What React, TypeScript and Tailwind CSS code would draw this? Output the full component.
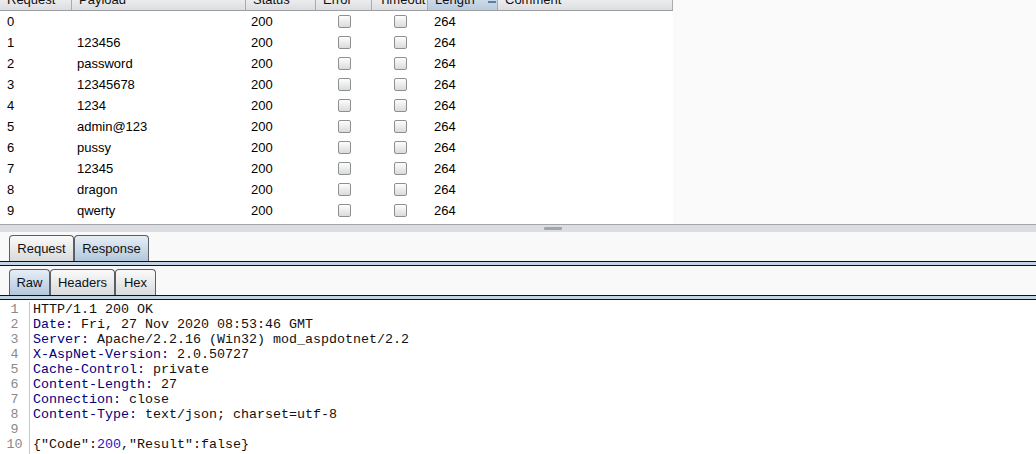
import React from "react";

const payloads = ["", "123456", "password", "12345678", "1234", "admin@123", "pussy", "12345", "dragon", "qwerty"];

const cols = "grid grid-cols-[72px_174px_70px_56px_56px_70px_175px]";

const Check = () => (
    <div className="w-[13px] h-[13px] rounded-[2px] border border-[#8e8f8f] bg-gradient-to-b from-[#fdfdfd] to-[#dadbdc]" />
);

const HeadCell = ({ label, sorted }: { label: string; sorted?: boolean }) => (
    <div
        className={`relative flex items-center pl-[7px] border-r border-[#a9abb0] ${
            sorted ? "bg-gradient-to-b from-[#e4edf6] to-[#b7cadd]" : "bg-gradient-to-b from-[#fdfdfd] to-[#dcdde0]"
        }`}
    >
        {label}
        {sorted && <div className="absolute left-[60px] top-[12px] w-[8px] h-[2px] bg-[#5d7fa6]" />}
    </div>
);

const Tab = ({ label, active, w }: { label: string; active?: boolean; w: string }) => (
    <div
        className={`${w} h-[26px] flex items-center justify-center rounded-t-[4px] border border-b-0 border-[#5a5f66] text-[13px] text-[#111] ${
            active ? "bg-gradient-to-b from-[#e6eef6] to-[#b3c8dc]" : "bg-gradient-to-b from-[#fafafa] to-[#d9dadc]"
        }`}
    >
        {label}
    </div>
);

const TabLine = () => (
    <div className="flex flex-col">
        <div className="h-px bg-[#111]" />
        <div className="h-[3px] bg-[#c3d4e5]" />
        <div className="h-px bg-[#111]" />
    </div>
);

type Seg = [string, string];
const N = "text-[#000080]";
const K = "text-[#111]";
const lines: Seg[][] = [
    [[K, "HTTP/1.1 200 OK"]],
    [[N, "Date:"], [K, " Fri, 27 Nov 2020 08:53:46 GMT"]],
    [[N, "Server:"], [K, " Apache/2.2.16 (Win32) mod_aspdotnet/2.2"]],
    [[N, "X-AspNet-Version:"], [K, " 2.0.50727"]],
    [[N, "Cache-Control:"], [K, " private"]],
    [[N, "Content-Length:"], [K, " 27"]],
    [[N, "Connection:"], [K, " close"]],
    [[N, "Content-Type:"], [K, " text/json; charset=utf-8"]],
    [],
    [[K, "{\"Code\":"], ["text-[#1a1ad0]", "200"], [K, ",\"Result\":false}"]],
];

export default function App() {
    return (
        <div className="w-[1036px] h-[454px] overflow-hidden bg-[#f9f9f9] font-['Liberation_Sans',Arial,sans-serif] text-[13px] text-black">
            <div className="flex h-[224px] bg-[#fafafa]">
                <div className="w-[673px] flex flex-col bg-white">
                    <div className={`${cols} h-[22px] -mt-[11px] border-b border-[#9c9ea3] text-[#111]`}>
                        <HeadCell label="Request" />
                        <HeadCell label="Payload" />
                        <HeadCell label="Status" />
                        <HeadCell label="Error" />
                        <HeadCell label="Timeout" />
                        <HeadCell label="Length" sorted />
                        <HeadCell label="Comment" />
                    </div>
                    {payloads.map((p, i) => (
                        <div key={i} className={`${cols} h-[21px] items-center`}>
                            <div className="pl-[7px]">{i}</div>
                            <div className="pl-[5px]">{p}</div>
                            <div className="pl-[5px]">200</div>
                            <div className="flex justify-center"><Check /></div>
                            <div className="flex justify-center"><Check /></div>
                            <div className="pl-[6px]">264</div>
                            <div />
                        </div>
                    ))}
                </div>
            </div>
            <div className="h-px bg-[#a4a5aa]" />
            <div className="h-[7px] bg-[#dcdde2] flex justify-center items-start pt-[2px]">
                <div className="ml-[70px] w-[18px] h-[3px] rounded-[1px] bg-[#a3a5ad]" />
            </div>
            <div className="flex pl-[9px] pt-[3px]">
                <Tab label="Request" w="w-[65px]" />
                <Tab label="Response" w="w-[75px]" active />
            </div>
            <TabLine />
            <div className="flex pl-[9px] pt-[3px]">
                <Tab label="Raw" w="w-[41px]" active />
                <Tab label="Headers" w="w-[65px]" />
                <Tab label="Hex" w="w-[41px]" />
            </div>
            <TabLine />
            <div className="flex h-[154px] pt-[2px] bg-white font-['Liberation_Mono','Courier_New',monospace] text-[13.33px] leading-[15px]">
                <div className="w-[30px] border-r border-[#c8c8c8] text-[#8a8a8a] text-center">
                    {lines.map((_, i) => (
                        <div key={i} className="h-[15px]">{i + 1}</div>
                    ))}
                </div>
                <div className="flex-1 pl-[3px] whitespace-pre">
                    {lines.map((l, i) => (
                        <div key={i} className="h-[15px]">
                            {l.map(([c, t], j) => (
                                <span key={j} className={c}>{t}</span>
                            ))}
                        </div>
                    ))}
                </div>
            </div>
        </div>
    );
}
